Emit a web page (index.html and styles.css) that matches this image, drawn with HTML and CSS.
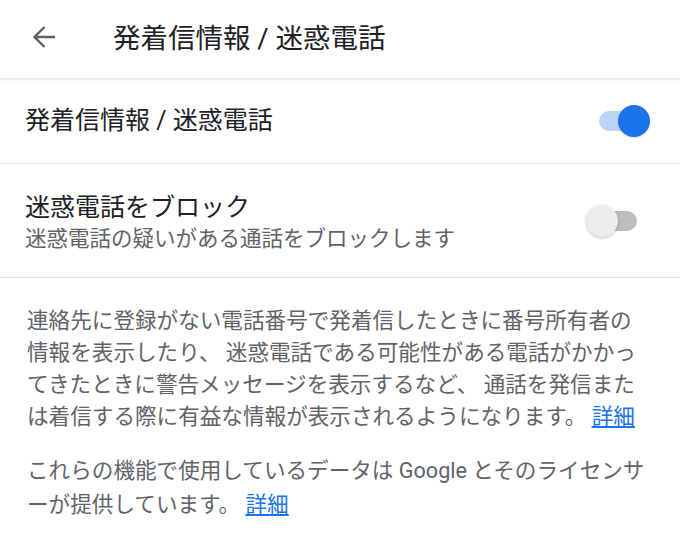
FILE: index.html
```html
<!DOCTYPE html>
<html lang="ja">
<head>
  <meta charset="UTF-8" />
  <meta name="viewport" content="width=device-width, initial-scale=1.0"/>
  <title>発着信情報 / 迷惑電話</title>
  <link rel="stylesheet" href="styles.css">
</head>
<body>

  <header class="topbar">
    <svg class="back" width="24" height="24" viewBox="0 0 24 24">
      <path d="M23 12H2.5M12.5 2L2.5 12l10 10" fill="none" stroke="#5f6368" stroke-width="2.4"/>
    </svg>
    <h1>発着信情報 / 迷惑電話</h1>
  </header>

  <div class="row row-main">
    <div class="row-title">発着信情報 / 迷惑電話</div>
    <div class="switch on"><span class="knob"></span></div>
  </div>

  <div class="row row-block">
    <div class="row-text">
      <div class="row-title">迷惑電話をブロック</div>
      <div class="row-sub">迷惑電話の疑いがある通話をブロックします</div>
    </div>
    <div class="switch"><span class="knob"></span></div>
  </div>

  <div class="info">
    <p>連絡先に登録がない電話番号で発着信したときに番号所有者の情報を表示したり、 迷惑電話である可能性がある電話がかかってきたときに警告メッセージを表示するなど、 通話を発信または着信する際に有益な情報が表示されるようになります。 <a href="#">詳細</a></p>
    <p>これらの機能で使用しているデータは Google とそのライセンサーが提供しています。 <a href="#">詳細</a></p>
  </div>

</body>
</html>
```

FILE: styles.css
```css
* {
  box-sizing: border-box;
}
body {
  margin: 0;
  background: #fff;
  font-family: Roboto, "Noto Sans CJK JP", sans-serif;
  color: #202124;
}

.topbar {
  height: 78px;
  display: flex;
  align-items: center;
  padding-left: 32px;
  box-shadow: 0 1px 3px rgba(0, 0, 0, 0.14);
  position: relative;
}
.back {
  display: block;
  margin-top: -4px;
}
.topbar h1 {
  margin: 0 0 0 57px;
  font-size: 27.5px;
  font-weight: 400;
  color: #202124;
  position: relative;
  top: -3px;
}

.row {
  display: flex;
  align-items: center;
  justify-content: space-between;
  padding-left: 25px;
  border-bottom: 1px solid #e0e0e0;
}
.row-main {
  height: 86px;
  padding-right: 33px;
}
.row-block {
  height: 114px;
  padding-right: 43px;
}
.row-text {
  padding-top: 5px;
}
.row-title {
  font-size: 25px;
  line-height: 30px;
}
.row-sub {
  font-size: 21.5px;
  line-height: 30px;
  margin-top: 1px;
  color: #5f6368;
}

.switch {
  width: 48px;
  height: 20px;
  border-radius: 10px;
  background: #bdbdbd;
  position: relative;
}
.switch .knob {
  position: absolute;
  top: -6px;
  left: -3px;
  width: 32px;
  height: 32px;
  border-radius: 50%;
  background: #ececec;
  box-shadow: 0 1px 3px rgba(0, 0, 0, 0.25);
}
.switch.on {
  background: #bcd3f8;
}
.switch.on .knob {
  left: auto;
  right: -3px;
  background: #1a73e8;
  box-shadow: 0 1px 2px rgba(160, 120, 40, 0.3);
}

.info {
  padding: 27px 30px 0 27px;
  color: #5f6368;
  font-size: 21.6px;
  line-height: 32px;
  line-break: loose;
}
.info p {
  margin: 0 0 22px;
}
.info p + p {
  line-height: 34px;
  margin-top: -1px;
}
.info a {
  color: #1a73e8;
  text-decoration: underline;
}
```
